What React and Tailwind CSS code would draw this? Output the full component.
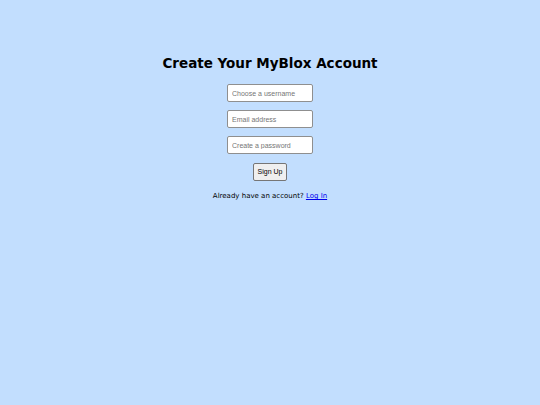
const inputCls =
  "w-[86px] h-[18px] bg-white border border-[#8f8f8f] rounded-[2px] px-[4px] text-[7px] text-black placeholder-[#757575] outline-none font-['Liberation_Sans',Arial,sans-serif]"

export default function App() {
  return (
    <div className="min-h-[405px] w-full bg-[#c2defe] flex flex-col items-center pt-[55px] font-['DejaVu_Sans',Verdana,sans-serif]">
      <h1 className="text-[13.5px] font-bold text-black leading-[16px]">Create Your MyBlox Account</h1>
      <form className="flex flex-col items-center gap-[8px] mt-[13px]" onSubmit={(e) => e.preventDefault()}>
        <input type="text" placeholder="Choose a username" className={inputCls} />
        <input type="email" placeholder="Email address" className={inputCls} />
        <input type="password" placeholder="Create a password" className={inputCls} />
        <button
          type="submit"
          className="mt-[1px] w-[34px] h-[18px] bg-[#efefef] border border-[#767676] rounded-[2px] text-[7px] font-normal text-black font-['Liberation_Sans',Arial,sans-serif]"
        >
          Sign Up
        </button>
      </form>
      <p className="mt-[10px] text-[7px] text-black">
        Already have an account? <a href="#" className="text-[#0000ee] underline">Log In</a>
      </p>
    </div>
  )
}
